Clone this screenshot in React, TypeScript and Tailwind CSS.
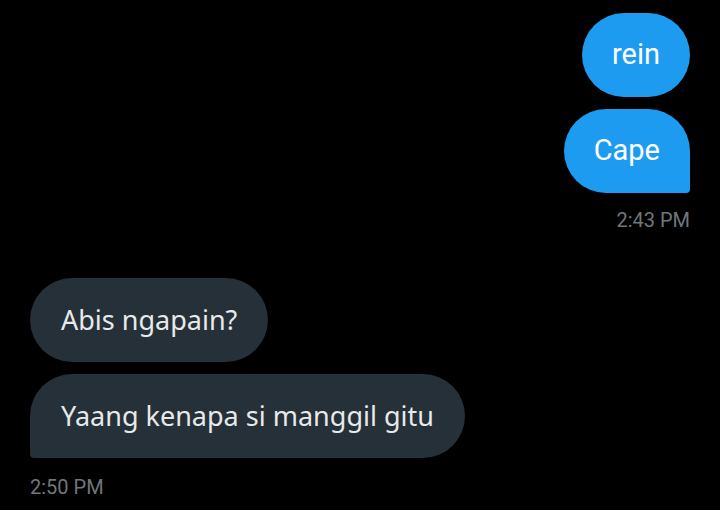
import React from "react";

type Msg = { text: string; tail?: boolean };

const sent: Msg[] = [{ text: "rein" }, { text: "Cape", tail: true }];
const received: Msg[] = [{ text: "Abis ngapain?" }, { text: "Yaang kenapa si manggil gitu", tail: true }];

export default function App() {
  return (
    <div className="w-[720px] h-[510px] bg-black overflow-hidden flex flex-col px-[30px] pt-[13px]">
      {/* Outgoing */}
      <div className="flex flex-col items-end gap-3">
        {sent.map((m) => (
          <div
            key={m.text}
            className={`h-[84px] flex items-center px-[30px] bg-[#1d9bf0] text-white text-[29px] font-['Roboto',sans-serif] rounded-[42px] ${
              m.tail ? "rounded-br-[4px]" : ""
            }`}
          >
            {m.text}
          </div>
        ))}
      </div>
      <div className="self-end mt-[14px] text-[20px] leading-[26px] text-[#71767b] font-['Roboto',sans-serif]">2:43 PM</div>

      {/* Incoming */}
      <div className="flex flex-col items-start gap-3 mt-[45px]">
        {received.map((m) => (
          <div
            key={m.text}
            className={`h-[84px] flex items-center px-[31px] bg-[#253039] text-[#e7e9ea] text-[27px] font-['Noto_Sans',sans-serif] rounded-[42px] ${
              m.tail ? "rounded-bl-[4px]" : ""
            }`}
          >
            {m.text}
          </div>
        ))}
      </div>
      <div className="self-start mt-[16px] text-[20px] leading-[26px] text-[#71767b] font-['Roboto',sans-serif]">2:50 PM</div>
    </div>
  );
}
